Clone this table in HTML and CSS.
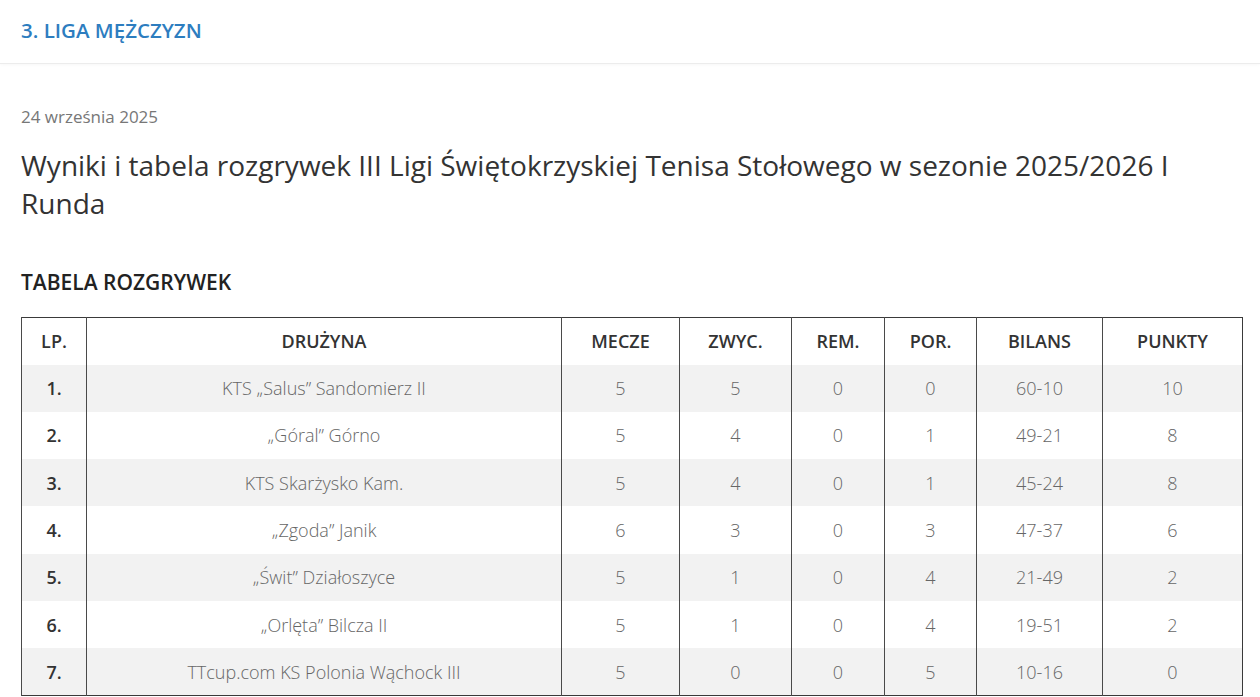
FILE: index.html
```html
<!DOCTYPE html>
<html lang="pl">
<head>
<meta charset="utf-8">
<title>3. Liga Mężczyzn</title>
<link rel="stylesheet" href="styles.css">
</head>
<body>
<header class="page-head">
  <h1 class="cat-title">3. LIGA MĘŻCZYZN</h1>
</header>
<main class="content">
  <div class="post-date">24 września 2025</div>
  <h2 class="post-title">Wyniki i tabela rozgrywek III Ligi Świętokrzyskiej Tenisa Stołowego w sezonie 2025/2026 I Runda</h2>
  <h3 class="section-title">TABELA ROZGRYWEK</h3>
  <table class="league">
    <colgroup>
      <col class="c-lp"><col class="c-team"><col class="c-m"><col class="c-w"><col class="c-r"><col class="c-p"><col class="c-b"><col class="c-pt">
    </colgroup>
    <thead>
      <tr><th>LP.</th><th>DRUŻYNA</th><th>MECZE</th><th>ZWYC.</th><th>REM.</th><th>POR.</th><th>BILANS</th><th>PUNKTY</th></tr>
    </thead>
    <tbody>
      <tr><td class="lp">1.</td><td>KTS „Salus” Sandomierz II</td><td>5</td><td>5</td><td>0</td><td>0</td><td>60-10</td><td>10</td></tr>
      <tr><td class="lp">2.</td><td>„Góral” Górno</td><td>5</td><td>4</td><td>0</td><td>1</td><td>49-21</td><td>8</td></tr>
      <tr><td class="lp">3.</td><td>KTS Skarżysko Kam.</td><td>5</td><td>4</td><td>0</td><td>1</td><td>45-24</td><td>8</td></tr>
      <tr><td class="lp">4.</td><td>„Zgoda” Janik</td><td>6</td><td>3</td><td>0</td><td>3</td><td>47-37</td><td>6</td></tr>
      <tr><td class="lp">5.</td><td>„Świt” Działoszyce</td><td>5</td><td>1</td><td>0</td><td>4</td><td>21-49</td><td>2</td></tr>
      <tr><td class="lp">6.</td><td>„Orlęta” Bilcza II</td><td>5</td><td>1</td><td>0</td><td>4</td><td>19-51</td><td>2</td></tr>
      <tr><td class="lp">7.</td><td>TTcup.com KS Polonia Wąchock III</td><td>5</td><td>0</td><td>0</td><td>5</td><td>10-16</td><td>0</td></tr>
    </tbody>
  </table>
</main>
</body>
</html>
```

FILE: styles.css
```css
html, body {
  margin: 0;
  padding: 0;
  background: #fff;
  font-family: "Open Sans", "Liberation Sans", sans-serif;
}

.page-head {
  height: 64px;
  box-sizing: border-box;
  display: flex;
  align-items: center;
  padding: 0 0 3px 21px;
  border-bottom: 1px solid #ececec;
  box-shadow: 0 1px 3px rgba(0,0,0,0.03);
}

.cat-title {
  margin: 0;
  font-size: 20.5px;
  font-weight: 600;
  color: #2d7dbf;
  letter-spacing: 0;
}

.content {
  padding: 0 18px 0 21px;
}

.post-date {
  margin-top: 42px;
  font-size: 17px;
  line-height: 22px;
  color: #777;
}

.post-title {
  margin: 18px 0 0;
  font-size: 28px;
  font-weight: 400;
  line-height: 38px;
  color: #333;
}

.section-title {
  margin: 46px 0 0;
  font-size: 21px;
  font-weight: 600;
  line-height: 28px;
  color: #222;
}

.league {
  margin-top: 21px;
  width: 100%;
  table-layout: fixed;
  border-collapse: collapse;
  border: 1px solid #3a3a3a;
}

.c-lp { width: 65px; }
.c-team { width: 475px; }
.c-m { width: 118px; }
.c-w { width: 112px; }
.c-r { width: 93px; }
.c-p { width: 92px; }
.c-b { width: 126px; }
.c-pt { width: 140px; }

.league th,
.league td {
  border-left: 1px solid #4a4a4a;
  text-align: center;
  padding: 0 4px;
  box-sizing: border-box;
}

.league th {
  font-size: 18px;
  font-weight: 600;
  color: #333;
  height: 47px;
}

.league td {
  font-size: 18px;
  font-weight: 300;
  color: #666;
  height: 47.33px;
}

.league td.lp {
  font-weight: 600;
  color: #333;
}

.league tbody tr:nth-child(odd) {
  background: #f2f2f2;
}
```
